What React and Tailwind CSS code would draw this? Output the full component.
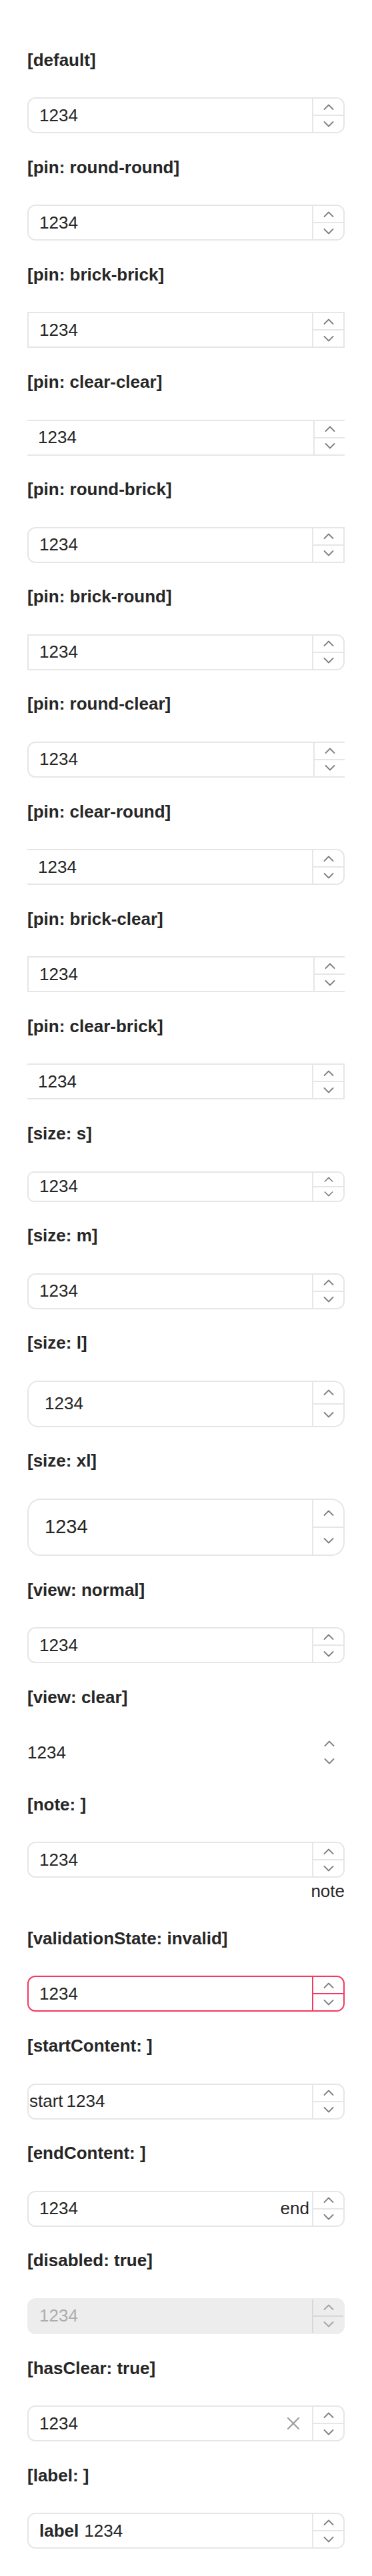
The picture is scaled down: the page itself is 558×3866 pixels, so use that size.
import React from "react";

const font = { fontFamily: '"Liberation Sans", Arial, sans-serif' };

const Chevron = ({ up, small, color = "#7f7f7f" }) => (
    <svg
        width={small ? 14 : 16}
        height={small ? 8 : 9}
        viewBox="0 0 16 9"
        fill="none"
        className="block"
    >
        <polyline
            points={up ? "1.5,8 8,1.5 14.5,8" : "1.5,1 8,7.5 14.5,1"}
            stroke={color}
            strokeWidth="1.8"
            strokeLinecap="round"
            strokeLinejoin="round"
        />
    </svg>
);

const Stepper = ({ divider, line, small, color, width }) => (
    <div className={`flex flex-col shrink-0 ${width} ${divider}`}>
        <div className={`flex flex-1 items-center justify-center ${line}`}>
            <Chevron up small={small} color={color} />
        </div>
        <div className="flex flex-1 items-center justify-center">
            <Chevron small={small} color={color} />
        </div>
    </div>
);

const items = [
    { title: "[default]", box: "border-2 border-[#e6e6e6] rounded-[12px]" },
    { title: "[pin: round-round]", box: "border-2 border-[#e6e6e6] rounded-[12px]" },
    { title: "[pin: brick-brick]", box: "border-2 border-[#e6e6e6]" },
    { title: "[pin: clear-clear]", box: "border-y-2 border-[#e6e6e6]" },
    { title: "[pin: round-brick]", box: "border-2 border-[#e6e6e6] rounded-l-[12px]" },
    { title: "[pin: brick-round]", box: "border-2 border-[#e6e6e6] rounded-r-[12px]" },
    { title: "[pin: round-clear]", box: "border-y-2 border-l-2 border-[#e6e6e6] rounded-l-[12px]" },
    { title: "[pin: clear-round]", box: "border-y-2 border-r-2 border-[#e6e6e6] rounded-r-[12px]" },
    { title: "[pin: brick-clear]", box: "border-y-2 border-l-2 border-[#e6e6e6]" },
    { title: "[pin: clear-brick]", box: "border-y-2 border-r-2 border-[#e6e6e6]" },
    { title: "[size: s]", box: "border-2 border-[#e6e6e6] rounded-[10px]", h: "h-[46px]", small: true },
    { title: "[size: m]", box: "border-2 border-[#e6e6e6] rounded-[12px]" },
    { title: "[size: l]", box: "border-2 border-[#e6e6e6] rounded-[16px]", h: "h-[70px]", pad: "pl-[24px]" },
    { title: "[size: xl]", box: "border-2 border-[#e6e6e6] rounded-[20px]", h: "h-[86px]", pad: "pl-[24px]", text: "text-[29px]" },
    { title: "[view: normal]", box: "border-2 border-[#e6e6e6] rounded-[12px]" },
    { title: "[view: clear]", box: "", pad: "pl-0", noDivider: true },
    { title: "[note: ]", box: "border-2 border-[#e6e6e6] rounded-[12px]", note: "note" },
    { title: "[validationState: invalid]", box: "border-2 border-[#f23a62] rounded-[12px]", invalid: true },
    { title: "[startContent: ]", box: "border-2 border-[#e6e6e6] rounded-[12px]", start: "start", pad: "pl-[5px]" },
    { title: "[endContent: ]", box: "border-2 border-[#e6e6e6] rounded-[12px]", end: "end" },
    { title: "[disabled: true]", box: "border-2 border-transparent bg-[#ededed] rounded-[12px]", disabled: true },
    { title: "[hasClear: true]", box: "border-2 border-[#e6e6e6] rounded-[12px]", clear: true },
    { title: "[label: ]", box: "border-2 border-[#e6e6e6] rounded-[12px]", label: "label", pad: "pl-[8px]" },
];

const NumberField = ({ item }) => {
    let divider = "border-l-2 border-[#e6e6e6]";
    let line = "border-b-2 border-[#e6e6e6]";
    let color = "#7f7f7f";
    if (item.invalid) {
        divider = "border-l-2 border-[#f23a62]";
        line = "border-b-2 border-[#f23a62]";
    }
    if (item.disabled) {
        divider = "border-l-2 border-[#d8d8d8]";
        line = "border-b-2 border-[#d8d8d8]";
        color = "#a3a3a3";
    }
    if (item.noDivider) {
        divider = "";
        line = "";
    }

    return (
        <div className={`flex overflow-hidden ${item.h || "h-[54px]"} ${item.box}`}>
            {item.start && (
                <span className="flex items-center pl-[1px] text-[26px] text-[#262626]">
                    {item.start}
                </span>
            )}
            {item.label && (
                <span className="flex items-center pl-[16px] text-[26px] font-bold text-[#262626]">
                    {item.label}
                </span>
            )}
            <div
                className={`flex flex-1 items-center ${item.pad || "pl-[16px]"} ${item.text || "text-[26px]"} ${
                    item.disabled ? "text-[#adadad]" : "text-[#262626]"
                }`}
            >
                1234
            </div>
            {item.end && (
                <span className="flex items-center pr-[4px] text-[26px] text-[#262626]">
                    {item.end}
                </span>
            )}
            {item.clear && (
                <div className="flex w-[40px] mr-[8px] items-center justify-center">
                    <svg width="20" height="20" viewBox="0 0 20 20" fill="none">
                        <path
                            d="M2 2 L18 18 M18 2 L2 18"
                            stroke="#a0a0a0"
                            strokeWidth="2.4"
                            strokeLinecap="round"
                        />
                    </svg>
                </div>
            )}
            <Stepper
                divider={divider}
                line={line}
                small={item.small}
                color={color}
                width={item.noDivider ? "w-[47px]" : "w-[47px]"}
            />
        </div>
    );
};

export default function App() {
    return (
        <div className="bg-white min-h-[3866px] px-[41px] pt-[74.6px]" style={font}>
            {items.map((item) => (
                <div key={item.title} className="pb-[35.65px]">
                    <div className="text-[26px] leading-[30px] font-bold text-[#262626]">
                        {item.title}
                    </div>
                    <div className="mt-[41.5px]">
                        <NumberField item={item} />
                        {item.note && (
                            <div className="text-right text-[26px] leading-[40px] text-[#262626]">
                                {item.note}
                            </div>
                        )}
                    </div>
                </div>
            ))}
        </div>
    );
}
